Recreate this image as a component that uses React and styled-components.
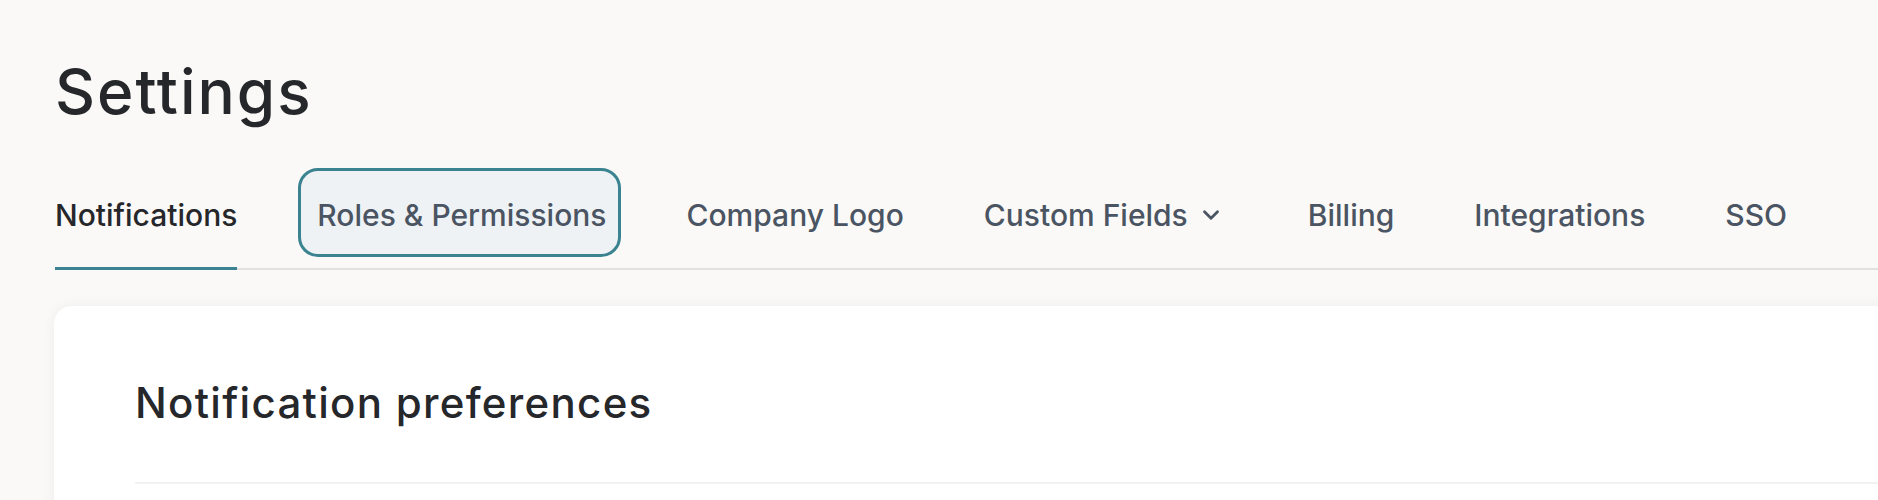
import React from "react";
import styled, { createGlobalStyle } from "styled-components";

const GlobalStyle = createGlobalStyle`
  html, body {
    margin: 0;
    padding: 0;
    background: #faf9f7;
    overflow: hidden;
  }
  body {
    font-family: Inter, "Noto Sans", sans-serif;
    color: #26272b;
  }
  * {
    box-sizing: border-box;
  }
`;

const Page = styled.main`
  padding: 54px 0 0 55px;
`;

const Title = styled.h1`
  margin: 0;
  font-size: 62px;
  line-height: 75px;
  font-weight: 500;
  letter-spacing: 2px;
  color: #26272b;
`;

const TabList = styled.nav`
  display: flex;
  align-items: flex-start;
  gap: 80px;
  margin-top: 68px;
  border-bottom: 2px solid #e2e1df;
`;

const Tab = styled.button`
  position: relative;
  isolation: isolate;
  display: flex;
  align-items: center;
  gap: 10px;
  margin: 0 0 -2px;
  padding: 0 0 34px;
  background: none;
  border: none;
  border-bottom: 3px solid ${(p) => (p.$active ? "#3b8390" : "transparent")};
  font-family: inherit;
  font-size: 30px;
  line-height: 36px;
  font-weight: 500;
  color: ${(p) => (p.$active ? "#26272b" : "#4b5462")};
  cursor: pointer;

  ${(p) =>
    p.$focused &&
    `
    &::before {
      content: "";
      position: absolute;
      top: -29px;
      bottom: 10px;
      left: -19px;
      right: -14px;
      border: 3px solid #3b8390;
      border-radius: 20px;
      background: #eef2f4;
      z-index: -1;
    }
  `}
`;

const Chevron = styled.svg`
  width: 26px;
  height: 26px;
  margin-right: 4px;
  flex-shrink: 0;
`;

const Card = styled.section`
  margin: 36px -40px 0 -1px;
  min-height: 400px;
  padding: 71px 0 0 81px;
  background: #ffffff;
  border-radius: 18px;
  box-shadow: 0 0 14px rgba(40, 30, 20, 0.05);
`;

const CardTitle = styled.h2`
  margin: 0 0 54px;
  font-size: 42px;
  line-height: 51px;
  font-weight: 500;
  letter-spacing: 1.3px;
  color: #26272b;
`;

const Divider = styled.hr`
  margin: 0;
  border: none;
  height: 2px;
  background: #f2f2f1;
`;

const tabs = [
  { label: "Notifications", active: true },
  { label: "Roles & Permissions", focused: true },
  { label: "Company Logo" },
  { label: "Custom Fields", menu: true },
  { label: "Billing" },
  { label: "Integrations" },
  { label: "SSO" },
];

export default function App() {
  return (
    <>
      <GlobalStyle />
      <Page>
        <Title>Settings</Title>
        <TabList>
          {tabs.map((tab) => (
            <Tab key={tab.label} $active={tab.active} $focused={tab.focused}>
              {tab.label}
              {tab.menu && (
                <Chevron viewBox="0 0 24 24" fill="none" stroke="currentColor" strokeWidth="2.6" strokeLinecap="round" strokeLinejoin="round">
                  <path d="m6 9 6 6 6-6" />
                </Chevron>
              )}
            </Tab>
          ))}
        </TabList>
        <Card>
          <CardTitle>Notification preferences</CardTitle>
          <Divider />
        </Card>
      </Page>
    </>
  );
}
